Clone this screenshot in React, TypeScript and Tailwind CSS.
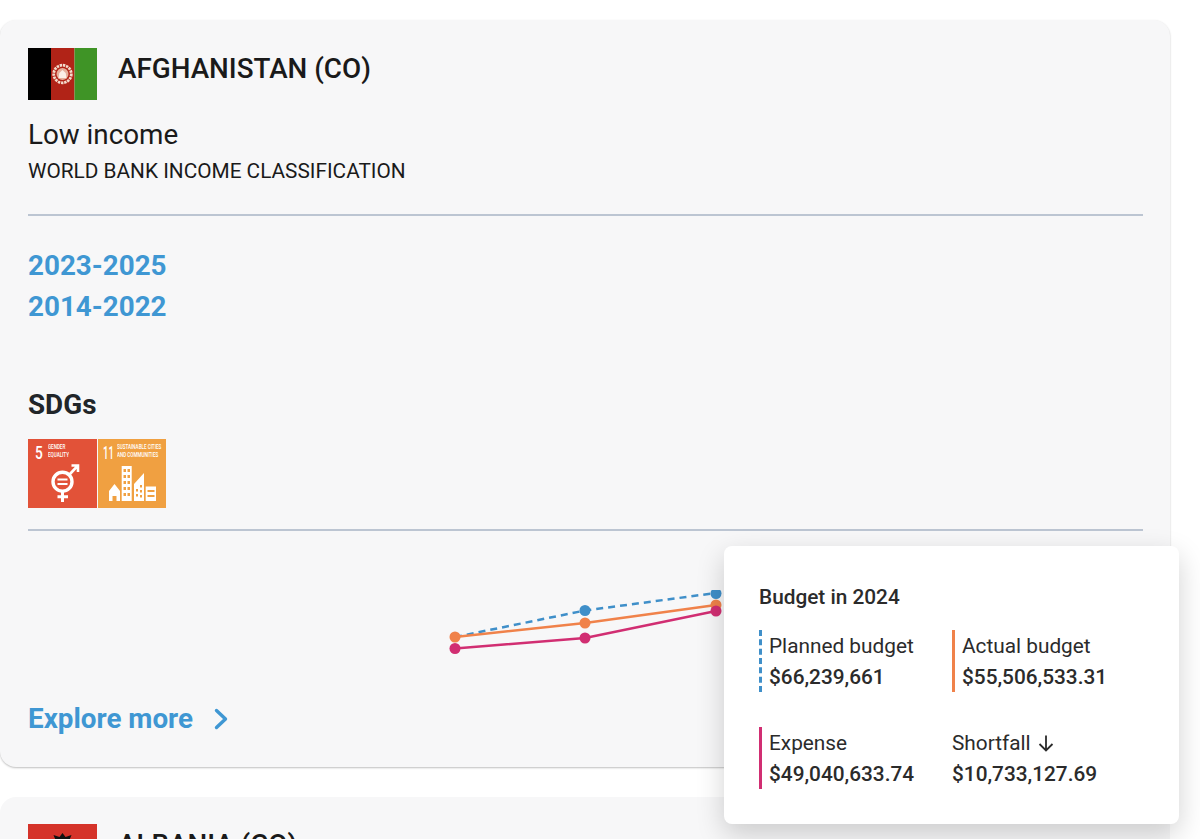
const FONT = "font-['Roboto','Liberation_Sans',sans-serif]";

function AfghanFlag() {
  return (
    <svg width="69" height="52" viewBox="0 0 69 52" className="shrink-0">
      <rect width="23.500" height="52" fill="#000000" />
      <rect x="23" width="23.500" height="52" fill="#b12317" />
      <rect x="46.500" width="22.500" height="52" fill="#3f9426" />
      <circle cx="34.500" cy="26" r="8.800" fill="none" stroke="#f3dccd" strokeWidth="2.800" strokeDasharray="2.400 .8" />
      <circle cx="34.500" cy="26" r="6" fill="#e6b09c" />
      <path d="M30.500 30h8l-.8-5-3.200-3-3.200 3z" fill="#fbeee6" />
    </svg>
  );
}

function SdgTile({
  num,
  numClass,
  lines,
  bg,
  width,
  children,
}: {
  num: string;
  numClass: string;
  lines: string[];
  bg: string;
  width: string;
  children: React.ReactNode;
}) {
  return (
    <div className={`relative h-[69px] overflow-hidden text-white ${width} ${bg}`}>
      <div className="flex items-start pl-[7px] pt-[5px]">
        <span className={`text-[19px] leading-[17px] font-medium whitespace-nowrap origin-left ${numClass}`}>
          {num}
        </span>
        <div className="text-[6.500px] leading-[7.500px] font-medium uppercase whitespace-nowrap scale-x-[0.7] origin-left">
          {lines.map((l) => (
            <div key={l}>{l}</div>
          ))}
        </div>
      </div>
      {children}
    </div>
  );
}

function GenderIcon() {
  return (
    <svg width="69" height="45" viewBox="0 0 69 45" className="absolute left-0 bottom-0" fill="none" stroke="#fff">
      <circle cx="34.500" cy="18.700" r="9.500" strokeWidth="3.400" />
      <path d="M34.500 28v11M29.500 33.700h10.500" strokeWidth="3" />
      <path d="M41.500 11.500l8-8.500M43.500 2.500h6.500V9" strokeWidth="2.600" />
      <path d="M29.500 16.500h10M29.500 21h10" strokeWidth="2.200" />
    </svg>
  );
}

function CityIcon() {
  return (
    <svg width="68" height="45" viewBox="0 0 68 45" className="absolute left-0 bottom-0" fill="#fff">
      <path d="M11 28l5.500-7 5.500 7v10h-3.500v-5h-4v5H11z" />
      <path
        fillRule="evenodd"
        d="M23.700 3h10v35h-10zM25.500 6v3h2.500V6zM29.500 6v3H32V6zM25.500 12v3H28v-3zM29.500 12v3H32v-3zM25.500 18v3H28v-3zM29.500 18v3H32v-3zM25.500 24v3H28v-3zM29.500 24v3H32v-3zM25.500 30v3H28v-3zM29.500 30v3H32v-3z"
      />
      <path
        fillRule="evenodd"
        d="M36 38V21l10-11v28zM38 26v2.500h2V26zM42 22v2.500h2V22zM38 31v2.500h2V31zM42 27v2.500h2V27zM42 32v2.500h2V32z"
      />
      <path fillRule="evenodd" d="M47.700 23.500H58V38H47.700zM49.500 27v2h7v-2zM49.500 32v2h7v-2z" />
    </svg>
  );
}

function BudgetChart() {
  return (
    <svg width="300" height="70" viewBox="0 0 300 70" className="block ml-[420px]" fill="none">
      <path d="M7 47L137 20.500L268 3" stroke="#3f8fc9" strokeWidth="2.500" strokeDasharray="7 5" />
      <path d="M7 47L137 33L268 15" stroke="#f0824a" strokeWidth="2.500" />
      <path d="M7 58.500L137 48L268 21" stroke="#d12e72" strokeWidth="2.500" />
      <circle cx="137" cy="20.500" r="5.500" fill="#3f8fc9" />
      <circle cx="268" cy="3.500" r="5.500" fill="#3f8fc9" />
      <circle cx="7" cy="47" r="5.500" fill="#f0824a" />
      <circle cx="137" cy="33" r="5.500" fill="#f0824a" />
      <circle cx="268" cy="15" r="5.500" fill="#f0824a" />
      <circle cx="7" cy="58.500" r="5.500" fill="#d12e72" />
      <circle cx="137" cy="48" r="5.500" fill="#d12e72" />
      <circle cx="268" cy="21" r="5.500" fill="#d12e72" />
    </svg>
  );
}

function Metric({
  label,
  value,
  border,
  icon,
}: {
  label: string;
  value: string;
  border?: string;
  icon?: React.ReactNode;
}) {
  return (
    <div className={`h-[62px] flex flex-col justify-center gap-[9px] ${border ?? ""}`}>
      <div className="flex items-center gap-[6px] text-[20.800px] leading-[22px] text-[#2b2b2b]">
        {label}
        {icon}
      </div>
      <div className="text-[20.800px] leading-[22px] font-medium text-[#2b2b2b] whitespace-nowrap">{value}</div>
    </div>
  );
}

function BudgetTooltip() {
  return (
    <div className="absolute left-[724px] top-[526px] w-[455px] h-[278px] rounded-[8px] bg-white shadow-[0_10px_28px_rgba(0,0,0,0.18)] pl-[35px] pt-[39px]">
      <div className="text-[20.800px] leading-[24px] font-medium text-[#2b2b2b]">Budget in 2024</div>
      <div className="grid grid-cols-[193px_193px] gap-y-[35px] mt-[21px]">
        <Metric label="Planned budget" value="$66,239,661" border="border-l-[3px] border-dashed border-[#3f8fc9] pl-[7px]" />
        <Metric label="Actual budget" value="$55,506,533.31" border="border-l-[3px] border-[#f0824a] pl-[7px]" />
        <Metric label="Expense" value="$49,040,633.74" border="border-l-[3px] border-[#d12e72] pl-[7px]" />
        <Metric
          label="Shortfall"
          value="$10,733,127.69"
          icon={
            <svg width="18" height="18" viewBox="0 0 18 18" fill="none" stroke="#2b2b2b" strokeWidth="1.800">
              <path d="M9 1.500v15M2.500 10l6.500 6.500 6.500-6.500" />
            </svg>
          }
        />
      </div>
    </div>
  );
}

export default function App() {
  return (
    <div className={`h-[839px] overflow-hidden bg-white pt-[20px] pr-[30px] ${FONT}`}>
      <section className="relative h-[747px] rounded-[16px] bg-[#f7f7f8] pl-[28px] pr-[27px] pt-[28px] shadow-[0_1px_2px_rgba(0,0,0,0.25)]">
        <div className="flex items-start gap-[21px]">
          <AfghanFlag />
          <h2 className="text-[27.800px] leading-[42px] font-medium text-[#1a1a1a]">AFGHANISTAN (CO)</h2>
        </div>
        <p className="mt-[17px] text-[27.800px] leading-[36px] text-[#1a1a1a]">Low income</p>
        <p className="text-[20.800px] leading-[26px] mt-[5px] text-[#1a1a1a]">WORLD BANK INCOME CLASSIFICATION</p>

        <div className="mt-[30px] h-[2px] bg-[#bcc5d2]" />

        <div className="mt-[33px] flex flex-col gap-[7px] text-[27.800px] leading-[34px] font-bold text-[#3f97d3]">
          <a>2023-2025</a>
          <a>2014-2022</a>
        </div>

        <h3 className="mt-[63px] text-[27.800px] leading-[36px] font-bold text-[#212529]">SDGs</h3>
        <div className="mt-[16px] flex gap-px">
          <SdgTile num="5" numClass="w-[13px] scale-x-[0.72]" lines={["Gender", "Equality"]} bg="bg-[#e25238]" width="w-[69px]">
            <GenderIcon />
          </SdgTile>
          <SdgTile
            num="11"
            numClass="w-[14px] -ml-[2px] scale-x-[0.5]"
            lines={["Sustainable cities", "and communities"]}
            bg="bg-[#f0a041]"
            width="w-[68px]"
          >
            <CityIcon />
          </SdgTile>
        </div>

        <div className="mt-[21px] h-[2px] bg-[#bcc5d2]" />

        <div className="mt-[59px]">
          <BudgetChart />
        </div>

        <a className="mt-[39px] flex items-center gap-[21px] text-[27.800px] leading-[40px] font-bold text-[#3f97d3]">
          Explore more
          <svg width="15" height="22" viewBox="0 0 15 22" fill="none" stroke="#3f97d3" strokeWidth="3.400" strokeLinecap="round" strokeLinejoin="round">
            <path d="M2.500 2.500L11.500 11L2.500 19.500" />
          </svg>
        </a>

        <BudgetTooltip />
      </section>

      <section className="mt-[30px] h-[200px] rounded-[16px] bg-[#f7f7f8] px-[28px] pt-[27px]">
        <div className="flex items-start gap-[21px]">
          <svg width="69" height="52" viewBox="0 0 69 52" className="shrink-0">
            <rect width="69" height="52" fill="#d5332a" />
            <path d="M34.500 9l3 4 6-2-2 5 6-1-4 6 4 1-6 5-2 6-5 6-5-6-2-6-6-5 4-1-4-6 6 1-2-5 6 2z" fill="#111111" />
          </svg>
          <h2 className="text-[27.800px] leading-[42px] font-medium text-[#1a1a1a]">ALBANIA (CO)</h2>
        </div>
      </section>
    </div>
  );
}
